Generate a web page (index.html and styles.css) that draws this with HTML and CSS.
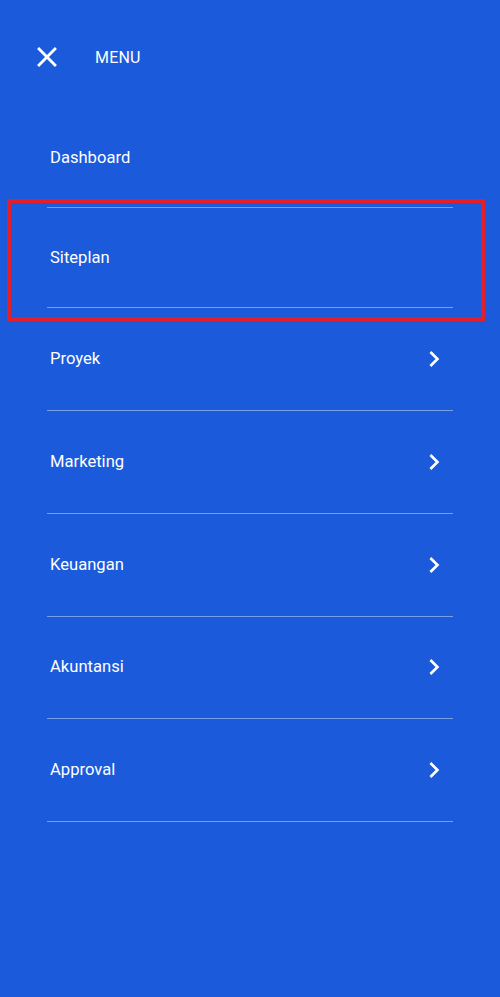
FILE: index.html
```html
<!DOCTYPE html>
<html lang="id">
<head>
<meta charset="utf-8">
<title>Menu</title>
<link rel="stylesheet" href="styles.css">
</head>
<body>
<div class="screen">
  <header class="header">
    <svg class="close" viewBox="0 0 24 24" width="34" height="34" aria-hidden="true">
      <path d="M19 6.41L17.59 5 12 10.59 6.41 5 5 6.41 10.59 12 5 17.59 6.41 19 12 13.41 17.59 19 19 17.59 13.41 12z" fill="#fff"/>
    </svg>
    <span class="title">MENU</span>
  </header>
  <nav class="menu">
    <div class="item plain first"><span>Dashboard</span></div>
    <div class="item plain highlighted"><span>Siteplan</span></div>
    <div class="item sub"><span>Proyek</span><svg class="chev" viewBox="0 0 24 24" width="32" height="32"><path d="M10 6L8.59 7.41 13.17 12l-4.58 4.59L10 18l6-6z" fill="#fff"/></svg></div>
    <div class="item sub"><span>Marketing</span><svg class="chev" viewBox="0 0 24 24" width="32" height="32"><path d="M10 6L8.59 7.41 13.17 12l-4.58 4.59L10 18l6-6z" fill="#fff"/></svg></div>
    <div class="item sub"><span>Keuangan</span><svg class="chev" viewBox="0 0 24 24" width="32" height="32"><path d="M10 6L8.59 7.41 13.17 12l-4.58 4.59L10 18l6-6z" fill="#fff"/></svg></div>
    <div class="item sub"><span>Akuntansi</span><svg class="chev" viewBox="0 0 24 24" width="32" height="32"><path d="M10 6L8.59 7.41 13.17 12l-4.58 4.59L10 18l6-6z" fill="#fff"/></svg></div>
    <div class="item sub"><span>Approval</span><svg class="chev" viewBox="0 0 24 24" width="32" height="32"><path d="M10 6L8.59 7.41 13.17 12l-4.58 4.59L10 18l6-6z" fill="#fff"/></svg></div>
  </nav>
</div>
</body>
</html>
```
FILE: styles.css
```css
html, body {
  margin: 0;
  padding: 0;
}
body {
  background: #1a5adb;
  font-family: Roboto, "Liberation Sans", Arial, sans-serif;
  color: #fff;
}
.screen {
  position: relative;
  width: 500px;
  height: 997px;
  background: #1a5adb;
  overflow: hidden;
}
.header {
  display: flex;
  align-items: center;
  height: 34px;
  padding: 40px 0 0 30px;
}
.close {
  display: block;
}
.title {
  margin-left: 31px;
  font-size: 16px;
  letter-spacing: 0.2px;
}
.menu {
  margin: 34px 47px 0 47px;
}
.item {
  display: flex;
  align-items: center;
  justify-content: space-between;
  border-bottom: 1px solid rgba(255, 255, 255, 0.42);
  font-size: 16.6px;
  padding-left: 3px;
  box-sizing: border-box;
}
.item.plain {
  height: 100px;
}
.item.sub {
  height: 102.85px;
  padding-right: 3px;
}
.item.sub span {
  margin-top: -1px;
}
.chev {
  display: block;
}
.highlighted {
  position: relative;
}
.highlighted::before {
  content: "";
  position: absolute;
  left: -40px;
  right: -32px;
  top: -9px;
  bottom: -14px;
  border: 4px solid #e2202c;
  pointer-events: none;
}
```
